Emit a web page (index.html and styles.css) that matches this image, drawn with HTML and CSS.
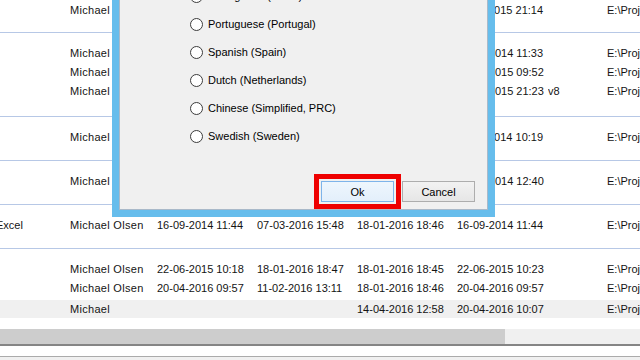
FILE: index.html
```html
<!DOCTYPE html>
<html lang="en">

<head>
  <meta charset="UTF-8">
  <meta name="viewport" content="width=device-width, initial-scale=1.0">
  <title>Documents</title>
  <link rel="stylesheet" href="styles.css">
</head>

<body>
  <div class="list">
    <div class="group first">
      <div class="row"><span></span><span class="owner">Michael Olsen</span><span></span><span></span><span></span><span>03-11-2015 21:14</span><span></span><span>E:\Projects\Sales</span></div>
    </div>
    <div class="group tall">
      <div class="row"><span></span><span class="owner">Michael Olsen</span><span></span><span></span><span></span><span>05-03-2014 11:33</span><span></span><span>E:\Projects\Sales</span></div>
      <div class="row"><span></span><span class="owner">Michael Olsen</span><span></span><span></span><span></span><span>12-01-2015 09:52</span><span></span><span>E:\Projects\Sales</span></div>
      <div class="row"><span></span><span class="owner">Michael Olsen</span><span></span><span></span><span></span><span>27-10-2015 21:23</span><span>v8</span><span>E:\Projects\Sales</span></div>
    </div>
    <div class="group">
      <div class="row"><span></span><span class="owner">Michael Olsen</span><span></span><span></span><span></span><span>11-06-2014 10:19</span><span></span><span>E:\Projects\Sales</span></div>
    </div>
    <div class="group">
      <div class="row"><span></span><span class="owner">Michael Olsen</span><span></span><span></span><span></span><span>02-09-2014 12:40</span><span></span><span>E:\Projects\Sales</span></div>
    </div>
    <div class="group">
      <div class="row"><span>Excel</span><span class="owner">Michael Olsen</span><span>16-09-2014 11:44</span><span>07-03-2016 15:48</span><span>18-01-2016 18:46</span><span>16-09-2014 11:44</span><span></span><span>E:\Projects\Sales</span></div>
    </div>
    <div class="group last">
      <div class="row"><span></span><span class="owner">Michael Olsen</span><span>22-06-2015 10:18</span><span>18-01-2016 18:47</span><span>18-01-2016 18:45</span><span>22-06-2015 10:23</span><span></span><span>E:\Projects\Sales</span></div>
      <div class="row"><span></span><span class="owner">Michael Olsen</span><span>20-04-2016 09:57</span><span>11-02-2016 13:11</span><span>18-01-2016 18:46</span><span>20-04-2016 09:57</span><span></span><span>E:\Projects\Sales</span></div>
      <div class="row sel"><span></span><span class="owner">Michael</span><span></span><span></span><span>14-04-2016 12:58</span><span>20-04-2016 10:07</span><span></span><span>E:\Projects\Sales</span></div>
    </div>
  </div>

  <div class="hscroll">
    <div class="thumb"></div>
  </div>
  <div class="statusbar"></div>

  <!-- language dialog -->
  <div class="dialog">
    <div class="dialog-body">
      <ul class="options">
        <li><span class="radio"></span>Portuguese (Brazil)</li>
        <li><span class="radio"></span>Portuguese (Portugal)</li>
        <li><span class="radio"></span>Spanish (Spain)</li>
        <li><span class="radio"></span>Dutch (Netherlands)</li>
        <li><span class="radio"></span>Chinese (Simplified, PRC)</li>
        <li><span class="radio"></span>Swedish (Sweden)</li>
      </ul>
      <div class="buttons">
        <button class="btn ok">Ok</button>
        <button class="btn">Cancel</button>
      </div>
    </div>
  </div>
</body>

</html>
```

FILE: styles.css
```css
body {
  margin: 0;
  height: 360px;
  overflow: hidden;
  background-color: #fff;
  font-family: "Liberation Sans", Arial, sans-serif;
  font-size: 11px;
  color: #141414;
  position: relative;
}

.list {
  margin-left: -4px;
}

.group {
  border-top: 1px solid #b7c8e6;
  padding: 11px 0 13px;
}

.group.first {
  border-top: none;
  padding: 1px 0 12px;
}

.group.tall {
  padding-bottom: 15px;
}

.group.last {
  padding-bottom: 11px;
}

.row {
  display: grid;
  grid-template-columns: 74px 87px 100px 100px 100px 91px 59px 1fr;
  height: 19px;
  line-height: 19px;
  white-space: nowrap;
}

.row span {
  overflow: hidden;
}

.row .owner {
  letter-spacing: 0.3px;
}

.row.sel {
  margin-top: 2px;
  height: 18px;
  line-height: 18px;
  background-color: #f0f0f0;
}

/* horizontal scrollbar */
.hscroll {
  height: 15px;
  background-color: #f0f0f0;
  border-bottom: 2px solid #858585;
}

.thumb {
  width: 505px;
  height: 100%;
  background-color: #cdcdcd;
}

.statusbar {
  margin-top: 10px;
  height: 20px;
  border-top: 1px solid #ababab;
  background-color: #f0f0f0;
}

/* dialog */
.dialog {
  position: absolute;
  left: 112px;
  top: -60px;
  width: 369px;
  height: 263px;
  border: 7px solid #66bdec;
}

.dialog-body {
  height: 100%;
  box-sizing: border-box;
  border: 1px solid #a9b9c9;
  background-color: #f0f0f0;
  display: flex;
  flex-direction: column;
  justify-content: space-between;
}

.options {
  list-style: none;
  margin: 0;
  padding: 34px 0 0 70px;
}

.options li {
  display: flex;
  align-items: center;
  gap: 5px;
  height: 28px;
  color: #000;
}

.radio {
  width: 11px;
  height: 11px;
  border: 1px solid #3c3c3c;
  border-radius: 50%;
  background-color: #fff;
}

.buttons {
  display: flex;
  justify-content: flex-end;
  gap: 8px;
  padding: 0 12px 7px 0;
}

.btn {
  width: 73px;
  height: 21px;
  padding: 0;
  font-family: "Liberation Sans", Arial, sans-serif;
  font-size: 11px;
  color: #000;
  border: 1px solid #adadad;
  background: linear-gradient(#f2f2f2, #e6e6e6);
}

.btn.ok {
  border-color: #7eb4ea;
  background: linear-gradient(#eef6fd, #e3effb);
  outline: 5px solid #ee0000;
  outline-offset: 2px;
}
```
